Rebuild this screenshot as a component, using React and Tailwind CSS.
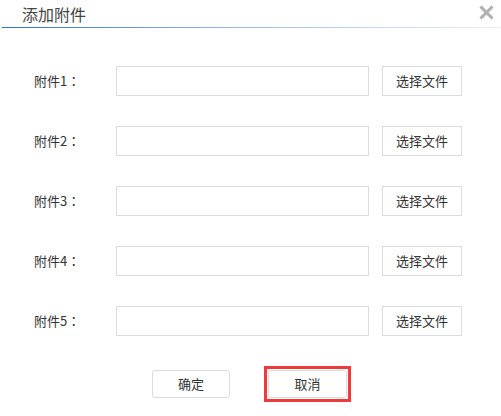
const ROWS = [1, 2, 3, 4, 5];

export default function App() {
  return (
    <div
      className="w-[501px] h-[416px] bg-white relative overflow-hidden text-[#333]"
      style={{ fontFamily: '"Noto Sans CJK SC", "Microsoft YaHei", sans-serif' }}
    >
      {/* 标题栏 */}
      <div className="h-[27px] flex items-center justify-between pl-[22px] pr-[7px]">
        <span className="text-[16px] leading-none text-[#444]">添加附件</span>
        <svg width="15" height="15" viewBox="0 0 15 15" className="mt-[-2px]">
          <path d="M1.5 1.5 L13.5 13.5 M13.5 1.5 L1.5 13.5" stroke="#b0b0b0" strokeWidth="3" />
        </svg>
      </div>
      <div className="ml-[2px] h-px bg-gradient-to-r from-[#2f6fcc] via-[#9fbde8] to-[#f0f0f0]" />

      {/* 附件行 */}
      <div className="flex flex-col gap-[30px] pt-[38px]">
        {ROWS.map((n) => (
          <div key={n} className="flex items-center h-[30px]">
            <span className="w-[116px] pl-[34px] text-[13px] text-[#333]">
              附件{n}
              <span style={{ fontFamily: '"Noto Sans CJK TC", sans-serif' }}>：</span>
            </span>
            <div className="w-[253px] h-[30px] border border-[#dcdcdc] bg-white" />
            <button className="ml-[13px] w-[80px] h-[30px] border border-[#dcdcdc] bg-white text-[13px] text-[#333]">
              选择文件
            </button>
          </div>
        ))}
      </div>

      {/* 底部按钮 */}
      <div className="flex items-center pl-[152px] pt-[30px] gap-[34px]">
        <button className="w-[78px] h-[28px] rounded-[3px] border border-[#dcdcdc] bg-white text-[13px] text-[#333]">
          确定
        </button>
        <div className="border-[3px] border-[#f03a3a] p-px">
          <button className="w-[79px] h-[28px] rounded-[3px] border border-[#dcdcdc] bg-white text-[13px] text-[#333]">
            取消
          </button>
        </div>
      </div>
    </div>
  );
}
